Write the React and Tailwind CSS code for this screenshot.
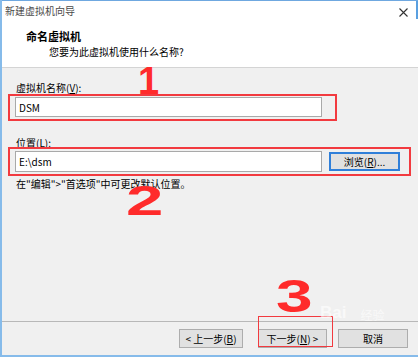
import React from "react";

const FONT = { fontFamily: '"Noto Sans CJK SC", "Noto Sans", sans-serif' };
const HAND = { fontFamily: '"Liberation Sans", Arial, sans-serif' };

const Button = ({ children, focused = false }) => (
  <div
    className={`flex h-[19px] items-center justify-center bg-[#e1e1e1] text-[10px] leading-none text-black ${
      focused ? "border-2 border-[#2f7fd9]" : "border border-[#adadad]"
    }`}
  >
    {children}
  </div>
);

export default function App() {
  return (
    <div
      className="relative flex h-[357px] w-[418px] flex-col overflow-hidden border-l-2 border-[#86bbea] bg-[#f0f0f0]"
      style={FONT}
    >
      {/* header */}
      <div className="relative h-[68px] shrink-0 border-b border-[#d4d4d4] border-t border-t-[#6fa8e0] bg-white">
        <div className="pl-[3px] pt-[3px] text-[10px] leading-[14px] text-[#4a4a4a]">新建虚拟机向导</div>
        <svg className="absolute right-[10px] top-[7px]" width="9" height="9" viewBox="0 0 9 9">
          <path d="M0.5 0.5 L8.5 8.5 M8.5 0.5 L0.5 8.5" stroke="#333" strokeWidth="1.1" />
        </svg>
        <div className="pl-[24px] pt-[11px] text-[11px] font-bold leading-[14px] text-black">命名虚拟机</div>
        <div className="pl-[47px] pt-[2px] text-[10px] leading-[14px] text-black">您要为此虚拟机使用什么名称?</div>
        <div className="absolute right-0 top-0 h-[18px] w-[2px] bg-[#5aa0e0]" />
      </div>

      {/* body */}
      <div className="flex flex-1 flex-col">
        <div className="pl-[14px] pt-[13px] text-[10px] leading-[14px] text-black">
          虚拟机名称(<span className="underline">V</span>):
        </div>
        <div className="ml-[6px] mt-[-1px] h-[27px] w-[329px] border-2 border-[#f23a3f] pl-[5px] pt-px">
          <div className="flex h-[20px] w-[307px] items-center border border-[#a9a9a9] bg-white pl-[3px] text-[10px] text-black">
            DSM
          </div>
        </div>

        <div className="pl-[14px] pt-[15px] text-[10px] leading-[14px] text-black">
          位置(<span className="underline">L</span>):
        </div>
        <div className="ml-[6px] mt-[-3px] flex h-[29px] w-[403px] items-center border-2 border-[#f23a3f] pl-[5px]">
          <div className="flex h-[21px] w-[307px] items-center border border-[#a9a9a9] bg-white pl-[3px] text-[10px] text-black">
            E:\dsm
          </div>
          <div className="ml-[7px] w-[71px]">
            <Button focused>
              浏览(<span className="underline">R</span>)...
            </Button>
          </div>
        </div>
        <div className="pl-[14px] pt-[1px] text-[10px] leading-[14px] text-black">
          在"编辑"&gt;"首选项"中可更改默认位置。
        </div>

        <div className="mt-auto border-t border-[#b8b8b8]" />
        <div className="flex h-[33px] items-start pt-[7px]">
          <div className="ml-[177px] w-[64px]">
            <Button>
              &lt; 上一步(<span className="underline">B</span>)
            </Button>
          </div>
          <div className="ml-[15px] w-[69px]">
            <Button>
              下一步(<span className="underline">N</span>) &gt;
            </Button>
          </div>
          <div className="ml-[11px] w-[70px]">
            <Button>取消</Button>
          </div>
        </div>
        <div className="h-[2px] bg-[#86bbea]" />
      </div>

      {/* red hand-written annotations */}
      <div
        className="pointer-events-none absolute left-[136px] top-[62px] text-[38px] font-bold leading-none text-[#ff2b2b]"
        style={HAND}
      >
        1
      </div>
      <div
        className="pointer-events-none absolute left-[124px] top-[180px] origin-top-left scale-x-[1.6] text-[42px] font-bold leading-none text-[#ff2b2b]"
        style={HAND}
      >
        2
      </div>
      <div
        className="pointer-events-none absolute left-[274px] top-[272px] origin-top-left scale-x-[1.4] text-[47px] font-bold leading-none text-[#ff2b2b]"
        style={HAND}
      >
        3
      </div>
      <div className="pointer-events-none absolute left-[256px] top-[316px] h-[31px] w-[75px] border-[1.5px] border-[#f23a3f]" />

      {/* watermark */}
      <div
        className="pointer-events-none absolute left-[318px] top-[304px] flex items-end text-white opacity-60"
        style={HAND}
      >
        <span className="text-[17px] font-bold leading-none">Bai</span>
        <span className="ml-[14px] text-[12px] leading-none" style={FONT}>经验</span>
      </div>
    </div>
  );
}
